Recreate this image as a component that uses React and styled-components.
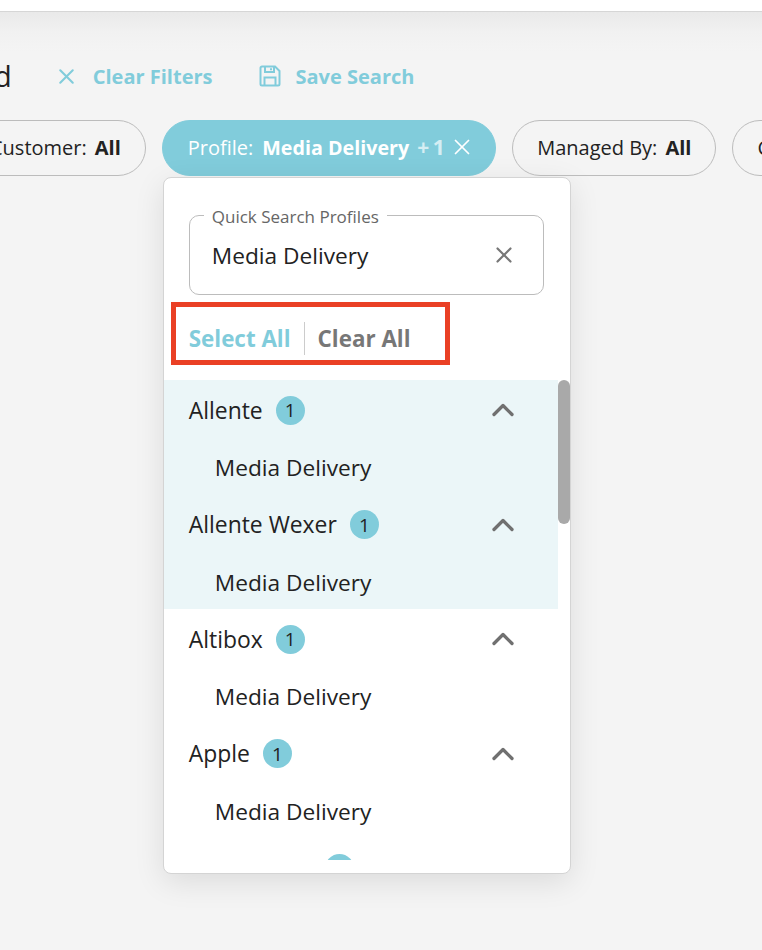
import React from 'react'
import styled, { createGlobalStyle } from 'styled-components'
import { X, ChevronUp } from 'lucide-react'

const teal = '#81ccdb'

const GlobalStyle = createGlobalStyle`
  html, body {
    margin: 0;
    height: 100%;
    background: #fff;
    font-family: "Open Sans", "Noto Sans", sans-serif;
    color: #222;
    overflow: hidden;
  }
`

const Page = styled.div`
  height: 950px;
  display: flex;
  flex-direction: column;
  overflow: hidden;
`
const TopBar = styled.div`
  height: 11px;
  flex: none;
  background: #fff;
  border-bottom: 1px solid #d6d6d6;
`
const Content = styled.div`
  flex: 1;
  background: linear-gradient(#e9e9e9 0, #f1f1f1 20px, #f4f4f4 40px);
  padding-top: 44px;
`
const Actions = styled.div`
  display: flex;
  align-items: center;
  height: 40px;
  margin-left: -6px;
`
const Title = styled.div`
  font-size: 29px;
  font-weight: 400;
  line-height: 40px;
  margin-right: 42px;
`
const Action = styled.div`
  display: flex;
  align-items: center;
  gap: ${(p) => p.$gap}px;
  margin-right: 47px;
  color: ${teal};
  font-size: 20px;
  font-weight: 700;
`
const SaveIcon = styled.svg`
  width: 22px;
  height: 22px;
  fill: none;
  stroke: ${teal};
  stroke-width: 2;
`
const Chips = styled.div`
  display: flex;
  gap: 16px;
  margin: 24px 0 0 -35px;
`
const Chip = styled.div`
  position: relative;
  flex: none;
  display: flex;
  align-items: center;
  box-sizing: border-box;
  height: 56px;
  padding: 0 ${(p) => (p.$active ? 20 : 24)}px 2px ${(p) => (p.$active ? 25 : 24)}px;
  border-radius: 28px;
  border: 1px solid ${(p) => (p.$active ? teal : '#bcbcbc')};
  background: ${(p) => (p.$active ? teal : 'transparent')};
  color: ${(p) => (p.$active ? '#fff' : '#222')};
  font-size: 20px;
  white-space: nowrap;
`
const ChipValue = styled.b`
  margin-left: ${(p) => (p.$wide ? 9 : 8)}px;
  font-size: ${(p) => (p.$wide ? 19.7 : 20)}px;
  font-weight: 700;
`
const ChipExtra = styled.span`
  margin: 0 1px 0 8px;
  color: #d5eef3;
  font-weight: 700;
  font-size: 21px;
  letter-spacing: 3.5px;
`
const Popup = styled.div`
  position: absolute;
  top: 56px;
  left: 0;
  width: 408px;
  height: 697px;
  box-sizing: border-box;
  display: flex;
  flex-direction: column;
  background: #fff;
  color: #222;
  border: 1px solid #d4d4d4;
  border-radius: 8px;
  box-shadow: 0 8px 30px rgba(0, 0, 0, 0.1);
  white-space: normal;
  overflow: hidden;
`
const SearchField = styled.div`
  position: relative;
  box-sizing: border-box;
  height: 80px;
  margin: 37px 26px 0 25px;
  padding: 0 26px 0 22px;
  display: flex;
  align-items: center;
  justify-content: space-between;
  border: 1px solid #bcbcbc;
  border-radius: 10px;
  font-size: 22.7px;
`
const Legend = styled.span`
  position: absolute;
  top: -9px;
  left: 14px;
  padding: 0 8px;
  background: #fff;
  color: #666;
  font-size: 17px;
  line-height: 20px;
`
const BulkRow = styled.div`
  position: relative;
  flex: none;
  display: flex;
  align-items: center;
  box-sizing: border-box;
  height: 85px;
  padding: 2px 0 0 25px;
  font-size: 22.4px;
  font-weight: 700;
`
const SelectAll = styled.span`
  color: ${teal};
  padding-right: 13px;
  border-right: 1px solid #ccc;
  line-height: 33px;
`
const ClearAll = styled.span`
  color: #777;
  padding-left: 13px;
`
const Highlight = styled.div`
  position: absolute;
  left: 7px;
  top: 7px;
  width: 279px;
  height: 63px;
  box-sizing: border-box;
  border: 5px solid #ea4025;
`
const ListArea = styled.div`
  position: relative;
  flex: none;
  height: 480px;
  overflow: hidden;
`
const Group = styled.div`
  width: 394px;
  height: 114.5px;
  background: ${(p) => (p.$selected ? '#ebf6f8' : 'transparent')};
`
const GroupHead = styled.div`
  position: relative;
  display: flex;
  align-items: center;
  gap: 13px;
  height: 60px;
  margin-bottom: -3px;
  padding-left: 25px;
  font-size: 22.9px;
`
const Spacer = styled.span`
  width: ${(p) => p.$width}px;
`
const Badge = styled.span`
  width: 29px;
  height: 29px;
  border-radius: 50%;
  background: ${teal};
  display: flex;
  align-items: center;
  justify-content: center;
  font-size: 19px;
`
const Chevron = styled(ChevronUp)`
  position: absolute;
  right: 37px;
  top: 12px;
  color: #707070;
`
const Item = styled.div`
  height: 57.5px;
  padding: 4px 0 0 51px;
  box-sizing: border-box;
  display: flex;
  align-items: center;
  font-size: 22.7px;
`
const ScrollThumb = styled.div`
  position: absolute;
  top: 0;
  right: 0;
  width: 12px;
  height: 144px;
  border-radius: 6px;
  background: #a9a9a9;
`

const groups = [
  { name: 'Allente', selected: true },
  { name: 'Allente Wexer', selected: true },
  { name: 'Altibox' },
  { name: 'Apple' },
]

export default function App() {
  return (
    <Page>
      <GlobalStyle />
      <TopBar />
      <Content>
        <Actions>
          <Title>d</Title>
          <Action $gap={14}>
            <X size={25} strokeWidth={2} />
            Clear Filters
          </Action>
          <Action $gap={14}>
            <SaveIcon viewBox="0 0 22 22">
              <path d="M3 1.5h13l4.5 4.5v13a1.5 1.5 0 0 1-1.5 1.5H3A1.5 1.5 0 0 1 1.5 19V3A1.5 1.5 0 0 1 3 1.5z" />
              <path d="M6 1.5V7h9V1.5M12 3.2v2" />
              <path d="M5.5 20.5v-8h11v8" />
            </SaveIcon>
            Save Search
          </Action>
        </Actions>
        <Chips>
          <Chip>
            Customer:<ChipValue>All</ChipValue>
          </Chip>
          <Chip $active>
            Profile:<ChipValue $wide>Media Delivery</ChipValue>
            <ChipExtra>+1</ChipExtra>
            <X size={26} strokeWidth={1.6} />
            <Popup>
              <SearchField>
                <Legend>Quick Search Profiles</Legend>
                Media Delivery
                <X size={26} color="#777" strokeWidth={2} />
              </SearchField>
              <BulkRow>
                <SelectAll>Select All</SelectAll>
                <ClearAll>Clear All</ClearAll>
                <Highlight />
              </BulkRow>
              <ListArea>
                {groups.map((g) => (
                  <Group key={g.name} $selected={g.selected}>
                    <GroupHead>
                      {g.name}
                      <Badge>1</Badge>
                      <Chevron size={36} strokeWidth={2.2} />
                    </GroupHead>
                    <Item>Media Delivery</Item>
                  </Group>
                ))}
                <GroupHead>
                  <Spacer $width={123} />
                  <Badge />
                </GroupHead>
                <ScrollThumb />
              </ListArea>
            </Popup>
          </Chip>
          <Chip>
            Managed By:<ChipValue>All</ChipValue>
          </Chip>
          <Chip>
            Contract:<ChipValue>All</ChipValue>
          </Chip>
        </Chips>
      </Content>
    </Page>
  )
}
